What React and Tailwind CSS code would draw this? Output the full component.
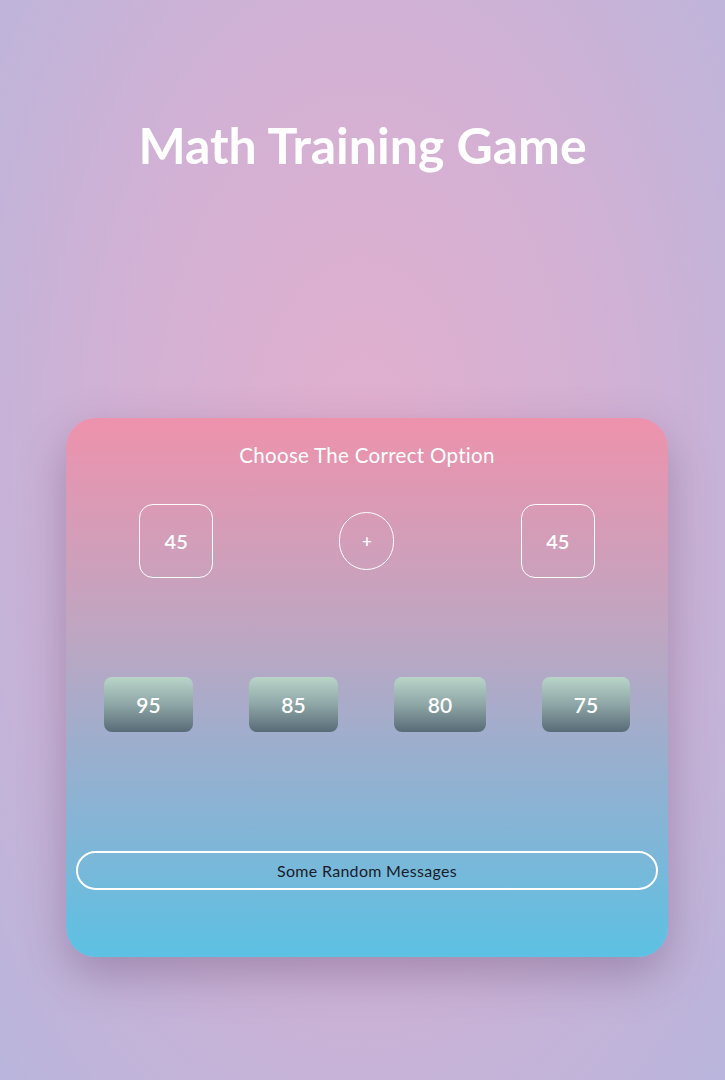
import React from "react";

const operands = [45, "+", 45];
const options = [
  { value: 95, w: "w-[89px]" },
  { value: 85, w: "w-[89px]" },
  { value: 80, w: "w-[92px]" },
  { value: 75, w: "w-[88px]" },
];

function NumberBox({ children, round }) {
  return (
    <div
      className={`flex items-center justify-center border border-white text-white font-semibold ${
        round ? "w-[55px] h-[58px] rounded-full text-[17px]" : "w-[74px] h-[74px] rounded-[14px] text-[20px]"
      }`}
    >
      {children}
    </div>
  );
}

export default function App() {
  return (
    <div
      className="min-h-[1080px] w-full flex flex-col items-center font-['Lato',sans-serif] bg-[radial-gradient(ellipse_at_50%_42%,#e2afce_0%,#d3b1d4_45%,#b9b5dc_100%)]"
    >
      <h1 className="mt-[112px] text-white font-bold text-[50px] leading-[66px]">
        Math Training Game
      </h1>

      <div className="mt-[240px] ml-[9px] w-[602px] h-[539px] rounded-[30px] px-[10px] flex flex-col bg-[linear-gradient(180deg,#ee92ac_0%,#bea6c2_40%,#86b4d5_75%,#5cc1e3_100%)] shadow-[0_18px_45px_rgba(90,60,100,0.35)]">
        <p className="mt-[25px] text-center text-white text-[20.5px] leading-[24px] tracking-[0.3px]">
          Choose The Correct Option
        </p>

        <div className="mt-[37px] flex justify-around items-center h-[74px]">
          {operands.map((o, i) => (
            <NumberBox key={i} round={o === "+"}>
              {o}
            </NumberBox>
          ))}
        </div>

        <div className="mt-[99px] flex justify-around">
          {options.map((o) => (
            <button
              key={o.value}
              className={`${o.w} h-[55px] rounded-[8px] text-white font-semibold text-[21px] bg-[linear-gradient(180deg,#b9d5c9_0%,#8ea6a6_50%,#586b78_100%)]`}
            >
              {o.value}
            </button>
          ))}
        </div>

        <div className="mt-[119px] h-[39px] rounded-full border-2 border-white flex items-center justify-center text-[16px] text-[#1b1b2a] tracking-[0.3px]">
          Some Random Messages
        </div>
      </div>
    </div>
  );
}
